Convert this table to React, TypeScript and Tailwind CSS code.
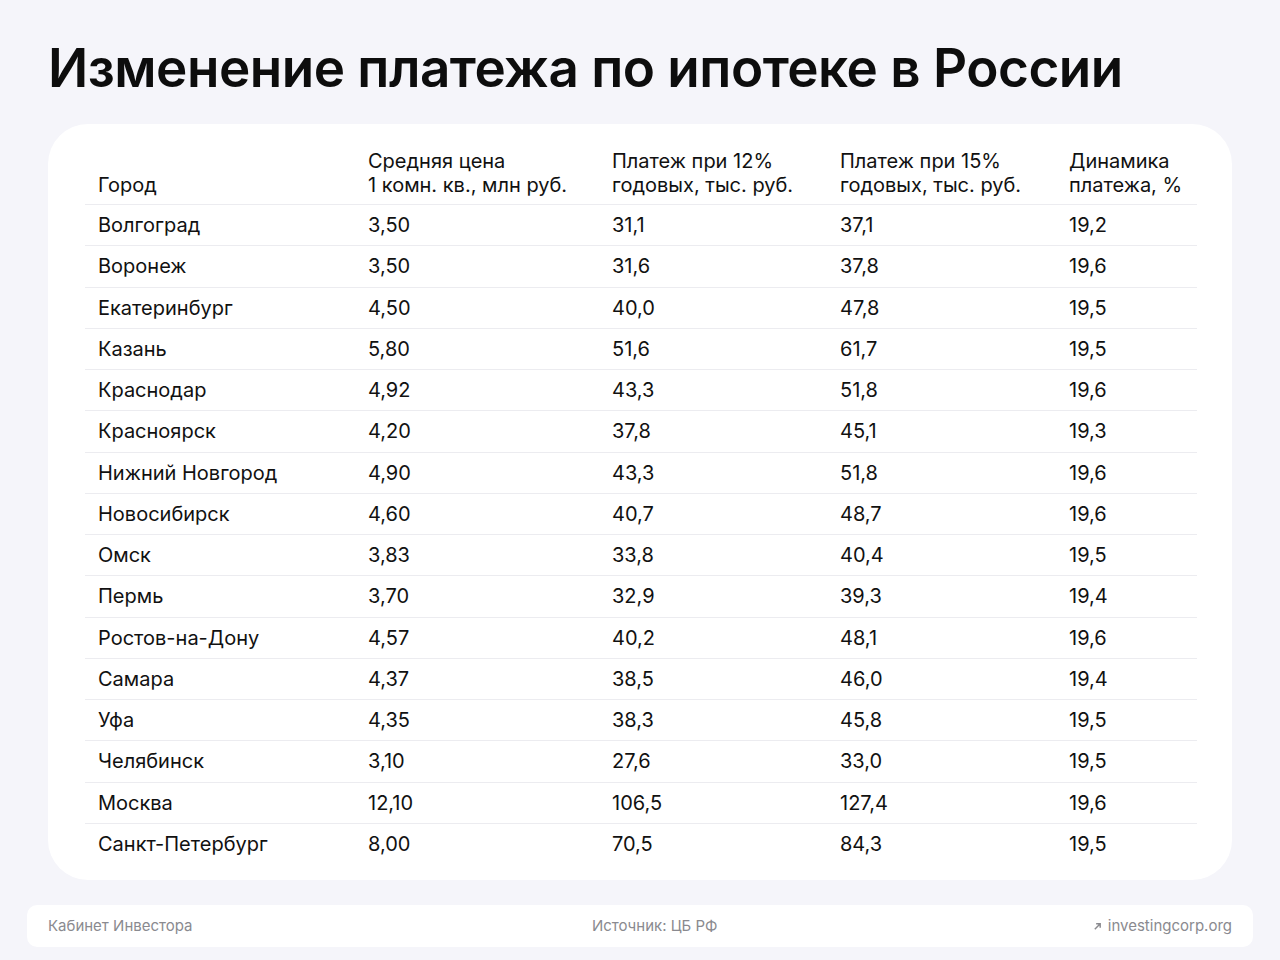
const rows: [string, string, string, string, string][] = [
  ["Волгоград", "3,50", "31,1", "37,1", "19,2"],
  ["Воронеж", "3,50", "31,6", "37,8", "19,6"],
  ["Екатеринбург", "4,50", "40,0", "47,8", "19,5"],
  ["Казань", "5,80", "51,6", "61,7", "19,5"],
  ["Краснодар", "4,92", "43,3", "51,8", "19,6"],
  ["Красноярск", "4,20", "37,8", "45,1", "19,3"],
  ["Нижний Новгород", "4,90", "43,3", "51,8", "19,6"],
  ["Новосибирск", "4,60", "40,7", "48,7", "19,6"],
  ["Омск", "3,83", "33,8", "40,4", "19,5"],
  ["Пермь", "3,70", "32,9", "39,3", "19,4"],
  ["Ростов-на-Дону", "4,57", "40,2", "48,1", "19,6"],
  ["Самара", "4,37", "38,5", "46,0", "19,4"],
  ["Уфа", "4,35", "38,3", "45,8", "19,5"],
  ["Челябинск", "3,10", "27,6", "33,0", "19,5"],
  ["Москва", "12,10", "106,5", "127,4", "19,6"],
  ["Санкт-Петербург", "8,00", "70,5", "84,3", "19,5"],
];

const headers = [
  ["Город"],
  ["Средняя цена", "1 комн. кв., млн руб."],
  ["Платеж при 12%", "годовых, тыс. руб."],
  ["Платеж при 15%", "годовых, тыс. руб."],
  ["Динамика", "платежа, %"],
];

const colWidths = ["w-[270px]", "w-[244px]", "w-[228px]", "w-[229px]", "w-[141px]"];

export default function App() {
  return (
    <div
      className="w-[1280px] h-[960px] bg-[#f5f5fa] text-[#111111] overflow-hidden"
      style={{ fontFamily: "Inter, 'Noto Sans', sans-serif" }}
    >
      {/* Title */}
      <h1 className="pl-[48px] pt-[36px] text-[53px] leading-[64px] font-semibold tracking-[-0.5px] text-[#0d0d0d]">
        Изменение платежа по ипотеке в России
      </h1>

      {/* Table card */}
      <div className="mx-[48px] mt-[24px] h-[756px] bg-white rounded-[40px] pl-[37px] pr-[35px] pt-[25px]">
        <table className="w-full border-collapse text-[20px]">
          <thead>
            <tr className="border-b border-[#ececf0]">
              {headers.map((h, i) => (
                <th
                  key={i}
                  className={`${colWidths[i]} pl-[13px] pb-[7px] text-left align-bottom font-normal leading-[24px]`}
                >
                  {h.map((line) => (
                    <div key={line}>{line}</div>
                  ))}
                </th>
              ))}
            </tr>
          </thead>
          <tbody>
            {rows.map((r, ri) => (
              <tr
                key={r[0]}
                className={ri < rows.length - 1 ? "border-b border-[#ececf0]" : ""}
              >
                {r.map((c, ci) => (
                  <td key={ci} className="pl-[13px] h-[41.25px] leading-[24px] align-middle">
                    {c}
                  </td>
                ))}
              </tr>
            ))}
          </tbody>
        </table>
      </div>

      {/* Footer */}
      <div className="mx-[27px] mt-[25px] h-[42px] bg-white rounded-[10px] flex items-center justify-between px-[21px] text-[15px] text-[#8a8a8f]">
        <span>Кабинет Инвестора</span>
        <span className="ml-[24px]">Источник: ЦБ РФ</span>
        <span className="flex items-center gap-[6px]">
          <svg width="9" height="9" viewBox="0 0 10 10" fill="none" stroke="currentColor" strokeWidth="1.6">
            <path d="M2 8L8 2M3.5 2H8V6.5" />
          </svg>
          investingcorp.org
        </span>
      </div>
    </div>
  );
}
